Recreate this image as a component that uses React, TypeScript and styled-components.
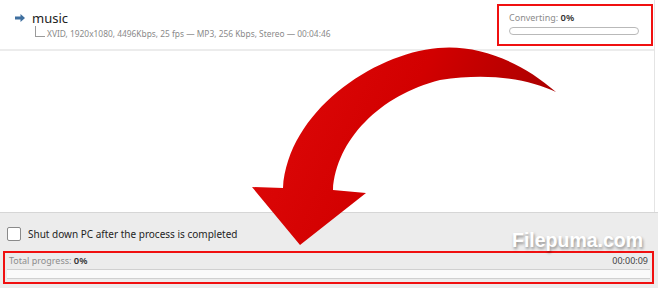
import React from "react";
import styled, { createGlobalStyle } from "styled-components";

const Global = createGlobalStyle`
  html, body { margin: 0; padding: 0; background: #ffffff; }
  body { width: 658px; height: 288px; overflow: hidden; font-family: "Noto Sans", "Open Sans", sans-serif; }
`;

const Page = styled.div`
  position: relative;
  width: 658px;
  height: 288px;
  display: flex;
  flex-direction: column;
  overflow: hidden;
`;

const ListPanel = styled.div`
  flex: 1;
  background: #ffffff;
  border-right: 1px solid #e4e4e4;
  margin-right: 3px;
  display: flex;
  flex-direction: column;
`;

const ItemRow = styled.div`
  height: 51px;
  box-sizing: border-box;
  border-bottom: 2px solid #ececec;
  display: flex;
  justify-content: space-between;
  align-items: flex-start;
  padding: 0 1px 0 15px;
`;

const ItemInfo = styled.div`
  display: flex;
  flex-direction: column;
  padding-top: 9px;
`;

const TitleLine = styled.div`
  display: flex;
  align-items: center;
  gap: 7px;
  height: 18px;
`;

const Title = styled.span`
  font-size: 13px;
  color: #222;
`;

const DetailLine = styled.div`
  display: flex;
  align-items: flex-end;
  margin-left: 20px;
  height: 13px;
`;

const TreeMark = styled.span`
  display: block;
  width: 9px;
  height: 10px;
  border-left: 1px solid #9a9a9a;
  border-bottom: 1px solid #9a9a9a;
  margin-right: 2px;
  margin-bottom: 3px;
`;

const Detail = styled.span`
  font-size: 8.4px;
  color: #8a8a8a;
  line-height: 13px;
`;

const Highlight = styled.div`
  border: 2px solid #f01010;
  box-sizing: border-box;
`;

const StatusBox = styled(Highlight)`
  width: 156px;
  height: 42px;
  margin-top: 4px;
  display: flex;
  flex-direction: column;
  padding: 6px 12px 0 10px;
  gap: 3px;
`;

const Label = styled.span<{ $size?: number }>`
  font-size: ${(p) => p.$size || 9}px;
  color: #8c8c8c;
  line-height: 12px;
  b { color: #333; font-weight: 600; font-size: 1.05em; }
`;

const SmallBar = styled.div`
  height: 6px;
  border: 1px solid #b9b9b9;
  border-radius: 4px;
  background: #fff;
`;

const BottomPanel = styled.div`
  height: 76px;
  box-sizing: border-box;
  background: #ececec;
  border-top: 1px solid #d6d6d6;
  display: flex;
  flex-direction: column;
  padding: 12px 4px 4px 3px;
`;

const CheckRow = styled.label`
  display: flex;
  align-items: center;
  gap: 7px;
  padding-left: 4px;
  height: 18px;
  font-size: 10px;
  color: #1e1e1e;
`;

const CheckBox = styled.span`
  width: 14px;
  height: 14px;
  box-sizing: border-box;
  border: 1px solid #8a8a8a;
  border-radius: 2px;
  background: #fff;
`;

const TotalBox = styled(Highlight)`
  margin-top: 9px;
  height: 34px;
  display: flex;
  flex-direction: column;
  padding: 1px 2px 3px 2px;
`;

const TotalHead = styled.div`
  display: flex;
  justify-content: space-between;
  padding: 0 2px 0 2px;
  height: 13px;
  align-items: center;
`;

const Time = styled.span`
  font-size: 9px;
  color: #444;
`;

const BigBar = styled.div`
  flex: 1;
  margin-top: 2px;
  background: #fafafa;
  border-top: 1px solid #d0d0d0;
  border-bottom: 1px solid #d0d0d0;
`;

const Watermark = styled.div`
  position: absolute;
  left: 512px;
  top: 229px;
  font-family: "Liberation Sans", Arial, sans-serif;
  font-weight: bold;
  font-size: 19.5px;
  color: #ffffff;
  text-shadow: 1px 2px 3px rgba(0, 0, 0, 0.4);
`;

const ArrowLayer = styled.svg`
  position: absolute;
  left: 0;
  top: 0;
  pointer-events: none;
`;

const SmallArrow = () => (
  <svg width="10" height="8" viewBox="0 0 10 8">
    <path d="M0 2.6 H5.5 V0 L10 4 L5.5 8 V5.4 H0 Z" fill="#3f6f9f" />
  </svg>
);

export default function App() {
  return (
    <Page>
      <Global />
      <ListPanel>
        <ItemRow>
          <ItemInfo>
            <TitleLine>
              <SmallArrow />
              <Title>music</Title>
            </TitleLine>
            <DetailLine>
              <TreeMark />
              <Detail>XVID, 1920x1080, 4496Kbps, 25 fps — MP3, 256 Kbps, Stereo — 00:04:46</Detail>
            </DetailLine>
          </ItemInfo>
          <StatusBox>
            <Label>
              Converting: <b>0%</b>
            </Label>
            <SmallBar />
          </StatusBox>
        </ItemRow>
      </ListPanel>
      <BottomPanel>
        <CheckRow>
          <CheckBox />
          Shut down PC after the process is completed
        </CheckRow>
        <TotalBox>
          <TotalHead>
            <Label $size={9}>
              Total progress: <b>0%</b>
            </Label>
            <Time>00:00:09</Time>
          </TotalHead>
          <BigBar />
        </TotalBox>
      </BottomPanel>
      <Watermark>Filepuma.com</Watermark>
      <ArrowLayer width="658" height="288" viewBox="0 0 658 288">
        <defs>
          <linearGradient id="ag" x1="0" y1="0" x2="1" y2="0.3">
            <stop offset="0" stopColor="#e00a0a" />
            <stop offset="0.55" stopColor="#d20000" />
            <stop offset="1" stopColor="#a80000" />
          </linearGradient>
        </defs>
        <path
          d="M556 92 C 522 62, 478 44, 438 48 C 372 54, 288 112, 283 188 L 252 187 L 300 245 L 366 193 L 333 190 C 336 140, 380 95, 440 80 C 492 72, 530 80, 556 92 Z"
          fill="url(#ag)"
        />
      </ArrowLayer>
    </Page>
  );
}
